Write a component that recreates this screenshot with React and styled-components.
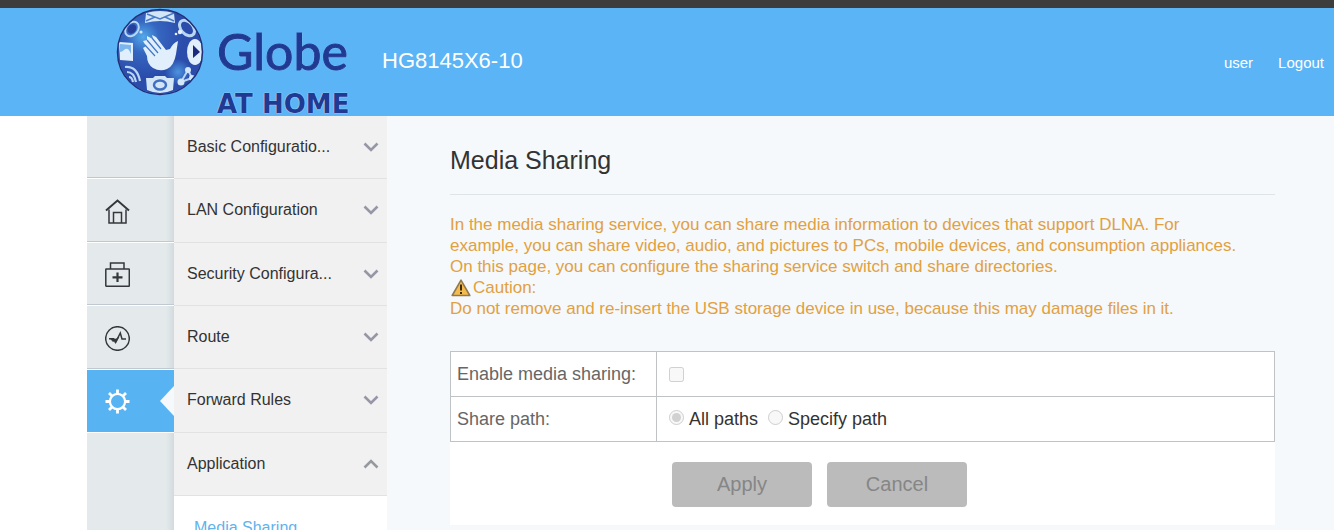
import React, { useState } from "react";
import styled, { createGlobalStyle } from "styled-components";

const menuItems = [
  { label: "Basic Configuratio..." },
  { label: "LAN Configuration" },
  { label: "Security Configura..." },
  { label: "Route" },
  { label: "Forward Rules" },
  { label: "Application", open: true },
];

const GlobeLogo = () => (
  <svg width="88" height="88" viewBox="0 0 88 88" aria-hidden="true">
    <defs>
      <radialGradient id="ball" cx="30%" cy="32%" r="48%">
        <stop offset="0" stopColor="#52a9ea" />
        <stop offset="0.4" stopColor="#3566c0" />
        <stop offset="1" stopColor="#2b4cab" />
      </radialGradient>
      <radialGradient id="glow" cx="50%" cy="50%" r="50%">
        <stop offset="0" stopColor="#4c94de" />
        <stop offset="1" stopColor="#4c94de" stopOpacity="0" />
      </radialGradient>
      <clipPath id="ballClip">
        <circle cx="44" cy="44" r="42" />
      </clipPath>
    </defs>
    <circle cx="44" cy="44" r="42" fill="url(#ball)" />
    <circle cx="62" cy="64" r="13" fill="url(#glow)" />
    <g clipPath="url(#ballClip)">
      {/* envelope */}
      <path d="M30 5 Q44 1 58 5 L59 15 Q44 11 29 15Z" fill="#d3e6f8" />
      <path d="M31 6 L44 11 L58 5 M30 13 L39 9 M58 13 L49 9" stroke="#4a7cc9" strokeWidth="1.5" fill="none" />
      {/* clock and lens */}
      <g fill="none" stroke="#b9d6f3">
        <ellipse cx="16" cy="21" rx="6" ry="8" strokeWidth="2" transform="rotate(38 16 21)" />
        <ellipse cx="71" cy="20" rx="6" ry="9" strokeWidth="3" transform="rotate(-42 71 20)" />
      </g>
      <ellipse cx="16" cy="21" rx="4" ry="5" fill="#263f9b" transform="rotate(38 16 21)" />
      <circle cx="64" cy="24" r="2.2" fill="#e3f0fc" />
      <circle cx="60" cy="26" r="1.3" fill="#e3f0fc" />
      <circle cx="25" cy="24" r="1.6" fill="#d3e6f8" />
      {/* page */}
      <path d="M3 34 L17 35 L17 53 L4 52Z" fill="#e0effb" />
      <path d="M4 36 L15 37 L15 46 Q12 38 8 42 Q6 44 4 44Z" fill="#7cb6ec" />
      {/* play button */}
      <ellipse cx="79" cy="44" rx="8" ry="13" fill="#e0effb" />
      <path d="M77 37 L84 44 L77 50Z" fill="#1b2a7c" />
      {/* signal */}
      <g fill="none" stroke="#b9d6f3" strokeWidth="2.2">
        <path d="M9 59 Q21 58 24 73" />
        <path d="M11 64 Q18 64 20 74" />
        <path d="M13 69 Q16 69 17 74" />
      </g>
      {/* camera */}
      <path d="M30 70 L37 70 L39 68 L49 68 L51 70 L58 70 L57 82 Q44 88 31 82Z" fill="#d3e6f8" />
      <ellipse cx="44" cy="77" rx="6" ry="4.5" fill="none" stroke="#3f6fc2" strokeWidth="2.5" />
      {/* share nodes */}
      <path d="M72 62 L65 74 L76 70Z" fill="none" stroke="#b9d6f3" strokeWidth="2" />
      <circle cx="72" cy="62" r="3" fill="#d3e6f8" />
      <circle cx="65" cy="74" r="3.5" fill="#d3e6f8" />
      <circle cx="76" cy="70" r="3" fill="#d3e6f8" />
    </g>
    {/* waving hand */}
    <path
      d="M31 48 Q31 56 37 60 Q44 64 51 61 Q58 58 60 46 L62 33 Q57 35 54 41 L50 42 L40 29 L36 27 L37 31 L31 28 L31 32 L27 33 L30 38 L27 40Z"
      fill="#e0effb"
    />
    <path d="M36 30 L45 41 M31 32 L42 45 M29 37 L39 48" stroke="#3f78c8" strokeWidth="1.2" />
    <circle cx="44" cy="44" r="42.5" fill="none" stroke="#232f78" strokeWidth="1.5" />
  </svg>
);

const HomeIcon = () => (
  <RailSvg viewBox="0 0 25 25">
    <path d="M1 11.5 L12.5 1.5 L24 11.5" strokeWidth="2" />
    <path d="M4 10.5 V24 H21 V10.5" />
    <path d="M8.5 24 V13.5 H16.5 V24" />
  </RailSvg>
);

const CaseIcon = () => (
  <RailSvg viewBox="0 0 25 25">
    <rect x="0.8" y="7" width="23.5" height="17.2" rx="0.5" />
    <path d="M5.5 7 V1 H19 V7" />
    <path d="M12.5 10.5 V20 M7.5 15.3 H17.5" strokeWidth="2.2" />
  </RailSvg>
);

const PulseIcon = () => (
  <RailSvg viewBox="0 0 25 25">
    <circle cx="12.5" cy="12.5" r="11.8" />
    <path d="M4 12.8 H8.5 L11 15.5 L15.3 7 L17 13 H21" />
    <path d="M5.5 12.8 L8 15.8 L9 15 L10.5 17.5 L14 11 L11 13Z" fill="#34373b" strokeWidth="0.5" />
  </RailSvg>
);

const GearIcon = () => (
  <RailSvg viewBox="0 0 25 25" $light>
    <circle cx="12.5" cy="12.5" r="7.6" strokeWidth="2.2" />
    <path
      d="M12.5 0.5 V5 M12.5 20 V24.5 M0.5 12.5 H5 M20 12.5 H24.5 M4 4 L7 7 M18 18 L21 21 M21 4 L18 7 M4 21 L7 18"
      strokeWidth="2.8"
    />
  </RailSvg>
);

const WarningIcon = () => (
  <WarningSvg viewBox="0 0 20 18" aria-hidden="true">
    <path d="M10 1.2 L18.8 16.5 H1.2Z" fill="#f5bc4d" stroke="#91794f" strokeWidth="1.6" strokeLinejoin="round" />
    <path d="M10 5.5 V11.5 M10 13 V15" stroke="#3d2d12" strokeWidth="2" />
  </WarningSvg>
);

const Chevron = ({ open }) => (
  <svg width="16" height="10" viewBox="0 0 16 10" fill="none" aria-hidden="true">
    <path
      d={open ? "M1.5 8.5 L8 2 L14.5 8.5" : "M1.5 1.5 L8 8 L14.5 1.5"}
      stroke={open ? "#969a9e" : "#9696a6"}
      strokeWidth="2.6"
    />
  </svg>
);

const railItems = [
  { name: "Status" },
  { name: "Home", icon: <HomeIcon /> },
  { name: "Toolkit", icon: <CaseIcon /> },
  { name: "Diagnose", icon: <PulseIcon /> },
  { name: "Advanced", icon: <GearIcon />, active: true },
];

const App = () => {
  const [path, setPath] = useState("all");

  return (
    <>
      <GlobalStyle />
      <Header>
        <Brand>
          <GlobeLogo />
          <Wordmark>
            <BrandName>Globe</BrandName>
            <BrandTag>AT HOME</BrandTag>
          </Wordmark>
        </Brand>
        <Model>HG8145X6-10</Model>
        <UserLinks>
          <HeaderLink href="#user">user</HeaderLink>
          <HeaderLink href="#logout">Logout</HeaderLink>
        </UserLinks>
      </Header>
      <Body>
        <Rail>
          <RailList>
            {railItems.map((item) => (
              <RailButton key={item.name} aria-label={item.name} $active={item.active}>
                {item.icon}
              </RailButton>
            ))}
          </RailList>
        </Rail>
        <Menu>
          <MenuList>
            {menuItems.map((item) => (
              <MenuButton key={item.label} aria-expanded={!!item.open}>
                {item.label}
                <Chevron open={item.open} />
              </MenuButton>
            ))}
          </MenuList>
          <SubLink href="#media-sharing">Media Sharing</SubLink>
        </Menu>
        <Content>
          <Title>Media Sharing</Title>
          <Notice>
            In the media sharing service, you can share media information to
            devices that support DLNA. For
            <br />
            example, you can share video, audio, and pictures to PCs, mobile
            devices, and consumption appliances.
            <br />
            On this page, you can configure the sharing service switch and share
            directories.
            <br />
            <WarningIcon />
            Caution:
            <br />
            Do not remove and re-insert the USB storage device in use, because
            this may damage files in it.
          </Notice>
          <Panel>
            <Table>
              <tbody>
                <tr>
                  <LabelCell>
                    <label htmlFor="enable">Enable media sharing:</label>
                  </LabelCell>
                  <Cell>
                    <Check type="checkbox" id="enable" disabled />
                  </Cell>
                </tr>
                <tr>
                  <LabelCell>Share path:</LabelCell>
                  <Cell>
                    <Options>
                      <Option>
                        <Radio
                          type="radio"
                          name="path"
                          checked={path === "all"}
                          onChange={() => setPath("all")}
                          disabled
                        />
                        All paths
                      </Option>
                      <Option>
                        <Radio
                          type="radio"
                          name="path"
                          checked={path === "specify"}
                          onChange={() => setPath("specify")}
                          disabled
                        />
                        Specify path
                      </Option>
                    </Options>
                  </Cell>
                </tr>
              </tbody>
            </Table>
            <Actions>
              <ActionButton disabled>Apply</ActionButton>
              <ActionButton disabled>Cancel</ActionButton>
            </Actions>
          </Panel>
        </Content>
      </Body>
    </>
  );
};

const GlobalStyle = createGlobalStyle`
  * {
    box-sizing: border-box;
  }

  html,
  body,
  #root {
    height: 100%;
  }

  body {
    margin: 0;
    overflow: hidden;
    background: #fff;
    color: #333;
    font-family: "Liberation Sans", Arial, sans-serif;
  }

  #root {
    display: flex;
    flex-direction: column;
  }

  button {
    font-family: inherit;
  }
`;

const Header = styled.header`
  display: flex;
  flex-shrink: 0;
  height: 116px;
  padding: 0 10px 0 116px;
  border-top: 8px solid #3d3d3d;
  background: #5ab4f5;
`;

const Brand = styled.div`
  display: flex;
  gap: 13px;
`;

const Wordmark = styled.div`
  display: flex;
  flex-direction: column;
  width: 132px;
  padding-top: 13px;
  color: #203a93;
  text-shadow: 0 0 1px #cfe3f8, 0 0 1px #cfe3f8;
`;

const BrandName = styled.span`
  -webkit-text-stroke: 1px #203a93;
  font: 400 50px/60px Lato, sans-serif;
`;

const BrandTag = styled.span`
  white-space: nowrap;
  font: 700 26px/46px "DejaVu Sans", sans-serif;
`;

const Model = styled.span`
  align-self: center;
  margin-left: 33px;
  padding-bottom: 2px;
  color: #fff;
  font-size: 22px;
`;

const UserLinks = styled.nav`
  display: flex;
  align-items: center;
  gap: 25px;
  margin-left: auto;
`;

const HeaderLink = styled.a`
  color: #fff;
  font-size: 15px;
  text-decoration: none;
`;

const Body = styled.div`
  display: flex;
  flex: 1;
  min-height: 0;
  padding-left: 87px;
`;

const Rail = styled.nav`
  flex: 0 0 87px;
  background: linear-gradient(to left, #d3dade 0, #e4eaec 8px);
`;

const RailList = styled.div`
  display: grid;
  grid-template-rows: repeat(5, 1fr);
  height: 317px;
`;

const RailButton = styled.button`
  position: relative;
  display: flex;
  align-items: center;
  padding: 2px 18px 0;
  border: 0;
  border-bottom: 1px solid #fff;
  background: ${({ $active }) => ($active ? "#58b3f2" : "transparent")};
  box-shadow: ${({ $active }) => ($active ? "none" : "inset 0 -1px #c0c9d1")};

  &::after {
    content: ${({ $active }) => ($active ? '""' : "none")};
    position: absolute;
    top: 50%;
    right: 0;
    margin-top: -15px;
    border: solid transparent;
    border-width: 15px 14px 15px 0;
    border-right-color: #f5f9fc;
  }
`;

const RailSvg = styled.svg`
  width: 25px;
  height: 25px;
  fill: none;
  stroke: ${({ $light }) => ($light ? "#fff" : "#34373b")};
  stroke-width: 1.5;
`;

const Menu = styled.nav`
  flex: 0 0 213px;
  background: #fff;
`;

const MenuList = styled.div`
  display: grid;
  grid-template-rows: repeat(6, 1fr);
  height: 380px;
`;

const MenuButton = styled.button`
  display: flex;
  align-items: center;
  justify-content: space-between;
  padding: 0 8px 0 13px;
  border: 0;
  border-bottom: 1px solid #e2e2e2;
  background: #f1f1f1;
  color: #333;
  font-size: 16px;
`;

const SubLink = styled.a`
  display: block;
  padding: 0 20px;
  color: #62b2ec;
  font-size: 16px;
  line-height: 64px;
  text-decoration: none;
`;

const Content = styled.main`
  flex: 1;
  min-width: 0;
  padding: 0 59px 0 63px;
  background: #f5f9fc;
`;

const Title = styled.h1`
  margin: 0;
  padding: 30px 0 19px;
  border-bottom: 1px solid #dfe4e7;
  font-size: 25px;
  font-weight: 400;
  line-height: 29px;
`;

const Notice = styled.p`
  margin: 19px 0 32px;
  color: #e2a03f;
  font-size: 17px;
  line-height: 21px;
`;

const WarningSvg = styled.svg`
  width: 20px;
  height: 18px;
  margin: 0 2px 0 1px;
  vertical-align: -4px;
`;

const Panel = styled.section`
  background: #fff;
`;

const Table = styled.table`
  width: 100%;
  border-collapse: collapse;
`;

const Cell = styled.td`
  height: 45px;
  padding: 0 12px;
  border: 1px solid #c0c3c6;
  font-size: 18px;
`;

const LabelCell = styled(Cell)`
  width: 25%;
  padding: 0 6px;
  color: #666;
`;

const Check = styled.input`
  display: block;
  width: 15px;
  height: 15px;
  margin: 0;
`;

const Options = styled.div`
  display: flex;
  gap: 10px;
`;

const Option = styled.label`
  display: flex;
  align-items: center;
  gap: 5px;
`;

const Radio = styled.input`
  width: 15px;
  height: 15px;
  margin: 0 0 4px;
`;

const Actions = styled.div`
  display: flex;
  gap: 15px;
  padding: 20px 0 18px 222px;
`;

const ActionButton = styled.button`
  width: 140px;
  height: 45px;
  border: 0;
  border-radius: 4px;
  background: #bbb;
  color: #868686;
  font-size: 20px;
`;

export default App;
